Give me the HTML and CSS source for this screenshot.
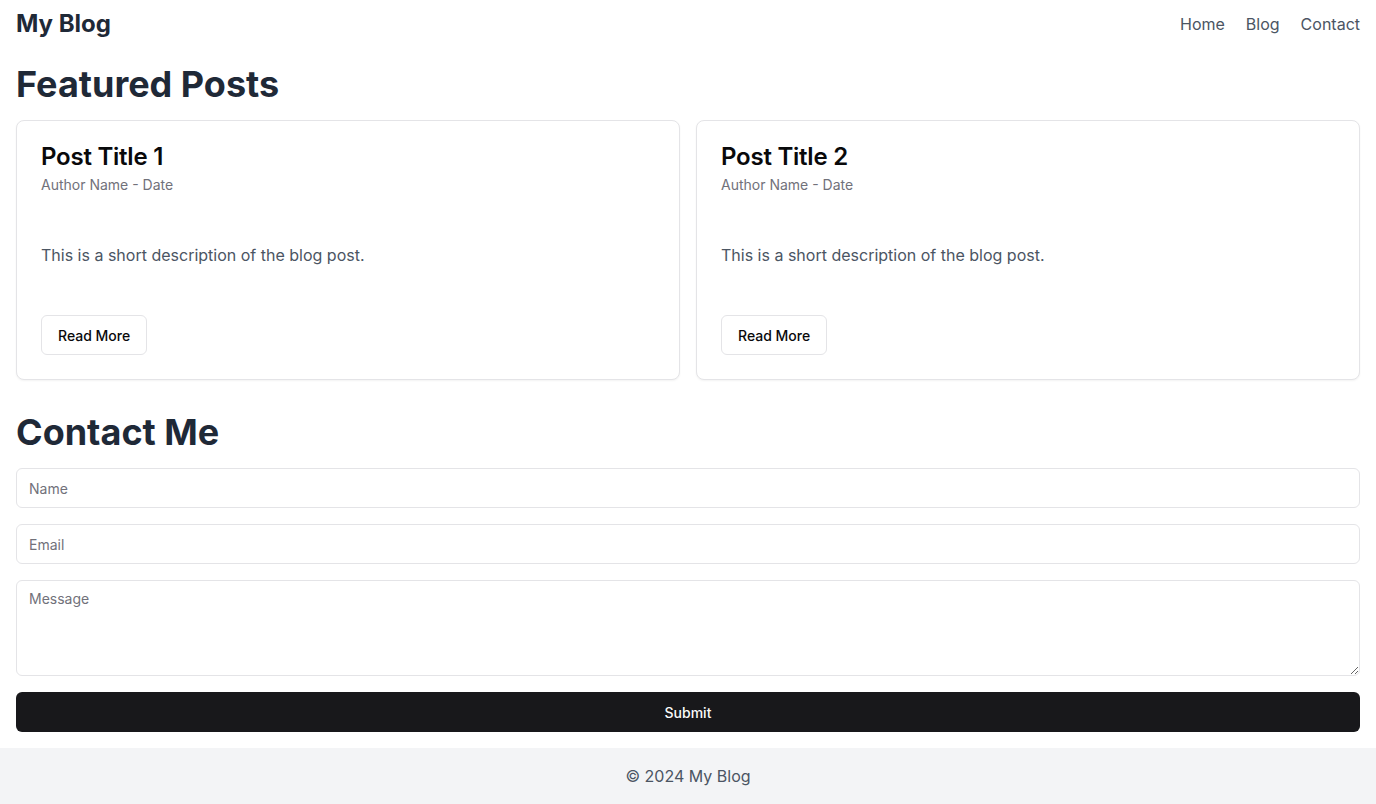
FILE: index.html
```html
<!DOCTYPE html>
<html lang="en">
<head>
<meta charset="utf-8">
<title>My Blog</title>
<link rel="stylesheet" href="styles.css">
</head>
<body>
<header class="site-header">
  <div class="brand">My Blog</div>
  <nav class="nav">
    <a href="#">Home</a>
    <a href="#">Blog</a>
    <a href="#">Contact</a>
  </nav>
</header>
<main class="main">
  <section class="section">
    <h2 class="section-title">Featured Posts</h2>
    <div class="cards">
      <article class="card">
        <div class="card-header">
          <h3 class="card-title">Post Title 1</h3>
          <p class="card-desc">Author Name - Date</p>
        </div>
        <div class="card-content">
          <p>This is a short description of the blog post.</p>
        </div>
        <div class="card-footer">
          <button class="btn-outline">Read More</button>
        </div>
      </article>
      <article class="card">
        <div class="card-header">
          <h3 class="card-title">Post Title 2</h3>
          <p class="card-desc">Author Name - Date</p>
        </div>
        <div class="card-content">
          <p>This is a short description of the blog post.</p>
        </div>
        <div class="card-footer">
          <button class="btn-outline">Read More</button>
        </div>
      </article>
    </div>
  </section>
  <section class="section">
    <h2 class="section-title">Contact Me</h2>
    <form class="form">
      <input class="field" type="text" placeholder="Name">
      <input class="field" type="email" placeholder="Email">
      <textarea class="field area" placeholder="Message"></textarea>
      <button class="btn-primary" type="button">Submit</button>
    </form>
  </section>
</main>
<footer class="site-footer">© 2024 My Blog</footer>
</body>
</html>
```

FILE: styles.css
```css
* { box-sizing: border-box; }
html, body { margin: 0; padding: 0; }
body {
  font-family: Inter, "Noto Sans", sans-serif;
  color: #09090b;
  background: #fff;
  -webkit-font-smoothing: antialiased;
}
.site-header {
  display: flex;
  justify-content: space-between;
  align-items: center;
  padding: 8px 16px;
}
.brand {
  font-size: 24px;
  line-height: 32px;
  font-weight: 700;
  color: #1f2937;
}
.nav { display: flex; gap: 21px; }
.nav a {
  color: #4b5563;
  text-decoration: none;
  font-size: 16px;
  line-height: 24px;
}
.main { padding: 0 16px; }
.section { margin-bottom: 32px; }
.section:first-child { margin-top: 16px; }
.section:last-child { margin-bottom: 16px; }
.section-title {
  margin: 0 0 16px;
  font-size: 36px;
  line-height: 40px;
  font-weight: 700;
  color: #1f2937;
}
.cards {
  display: grid;
  grid-template-columns: 1fr 1fr;
  gap: 16px;
}
.card {
  border: 1px solid #e4e4e7;
  border-radius: 8px;
  background: #fff;
  box-shadow: 0 1px 2px rgba(0,0,0,0.05);
}
.card-header {
  padding: 24px;
  display: flex;
  flex-direction: column;
  gap: 6px;
}
.card-title {
  margin: 0;
  font-size: 24px;
  line-height: 1;
  font-weight: 600;
  letter-spacing: -0.01em;
}
.card-desc {
  margin: 0;
  font-size: 14px;
  line-height: 20px;
  color: #71717a;
}
.card-content { padding: 24px; }
.card-content p {
  margin: 0;
  font-size: 16px;
  line-height: 24px;
  color: #4b5563;
}
.card-footer { padding: 24px; display: flex; }
.btn-outline {
  height: 40px;
  padding: 8px 16px;
  border: 1px solid #e4e4e7;
  border-radius: 6px;
  background: #fff;
  font-family: inherit;
  font-size: 14px;
  font-weight: 500;
  color: #09090b;
}
.form { display: flex; flex-direction: column; gap: 16px; }
.field {
  display: block;
  width: 100%;
  height: 40px;
  padding: 8px 12px;
  border: 1px solid #e4e4e7;
  border-radius: 6px;
  background: #fff;
  font-family: inherit;
  font-size: 14px;
  line-height: 20px;
  color: #09090b;
  margin: 0;
}
.field::placeholder { color: #71717a; }
.area { height: 96px; resize: vertical; }
.btn-primary {
  height: 40px;
  border: 0;
  border-radius: 6px;
  background: #18181b;
  color: #fafafa;
  font-family: inherit;
  font-size: 14px;
  font-weight: 500;
}
.site-footer {
  background: #f3f4f6;
  padding: 16px;
  text-align: center;
  font-size: 16px;
  line-height: 24px;
  color: #4b5563;
}
```
